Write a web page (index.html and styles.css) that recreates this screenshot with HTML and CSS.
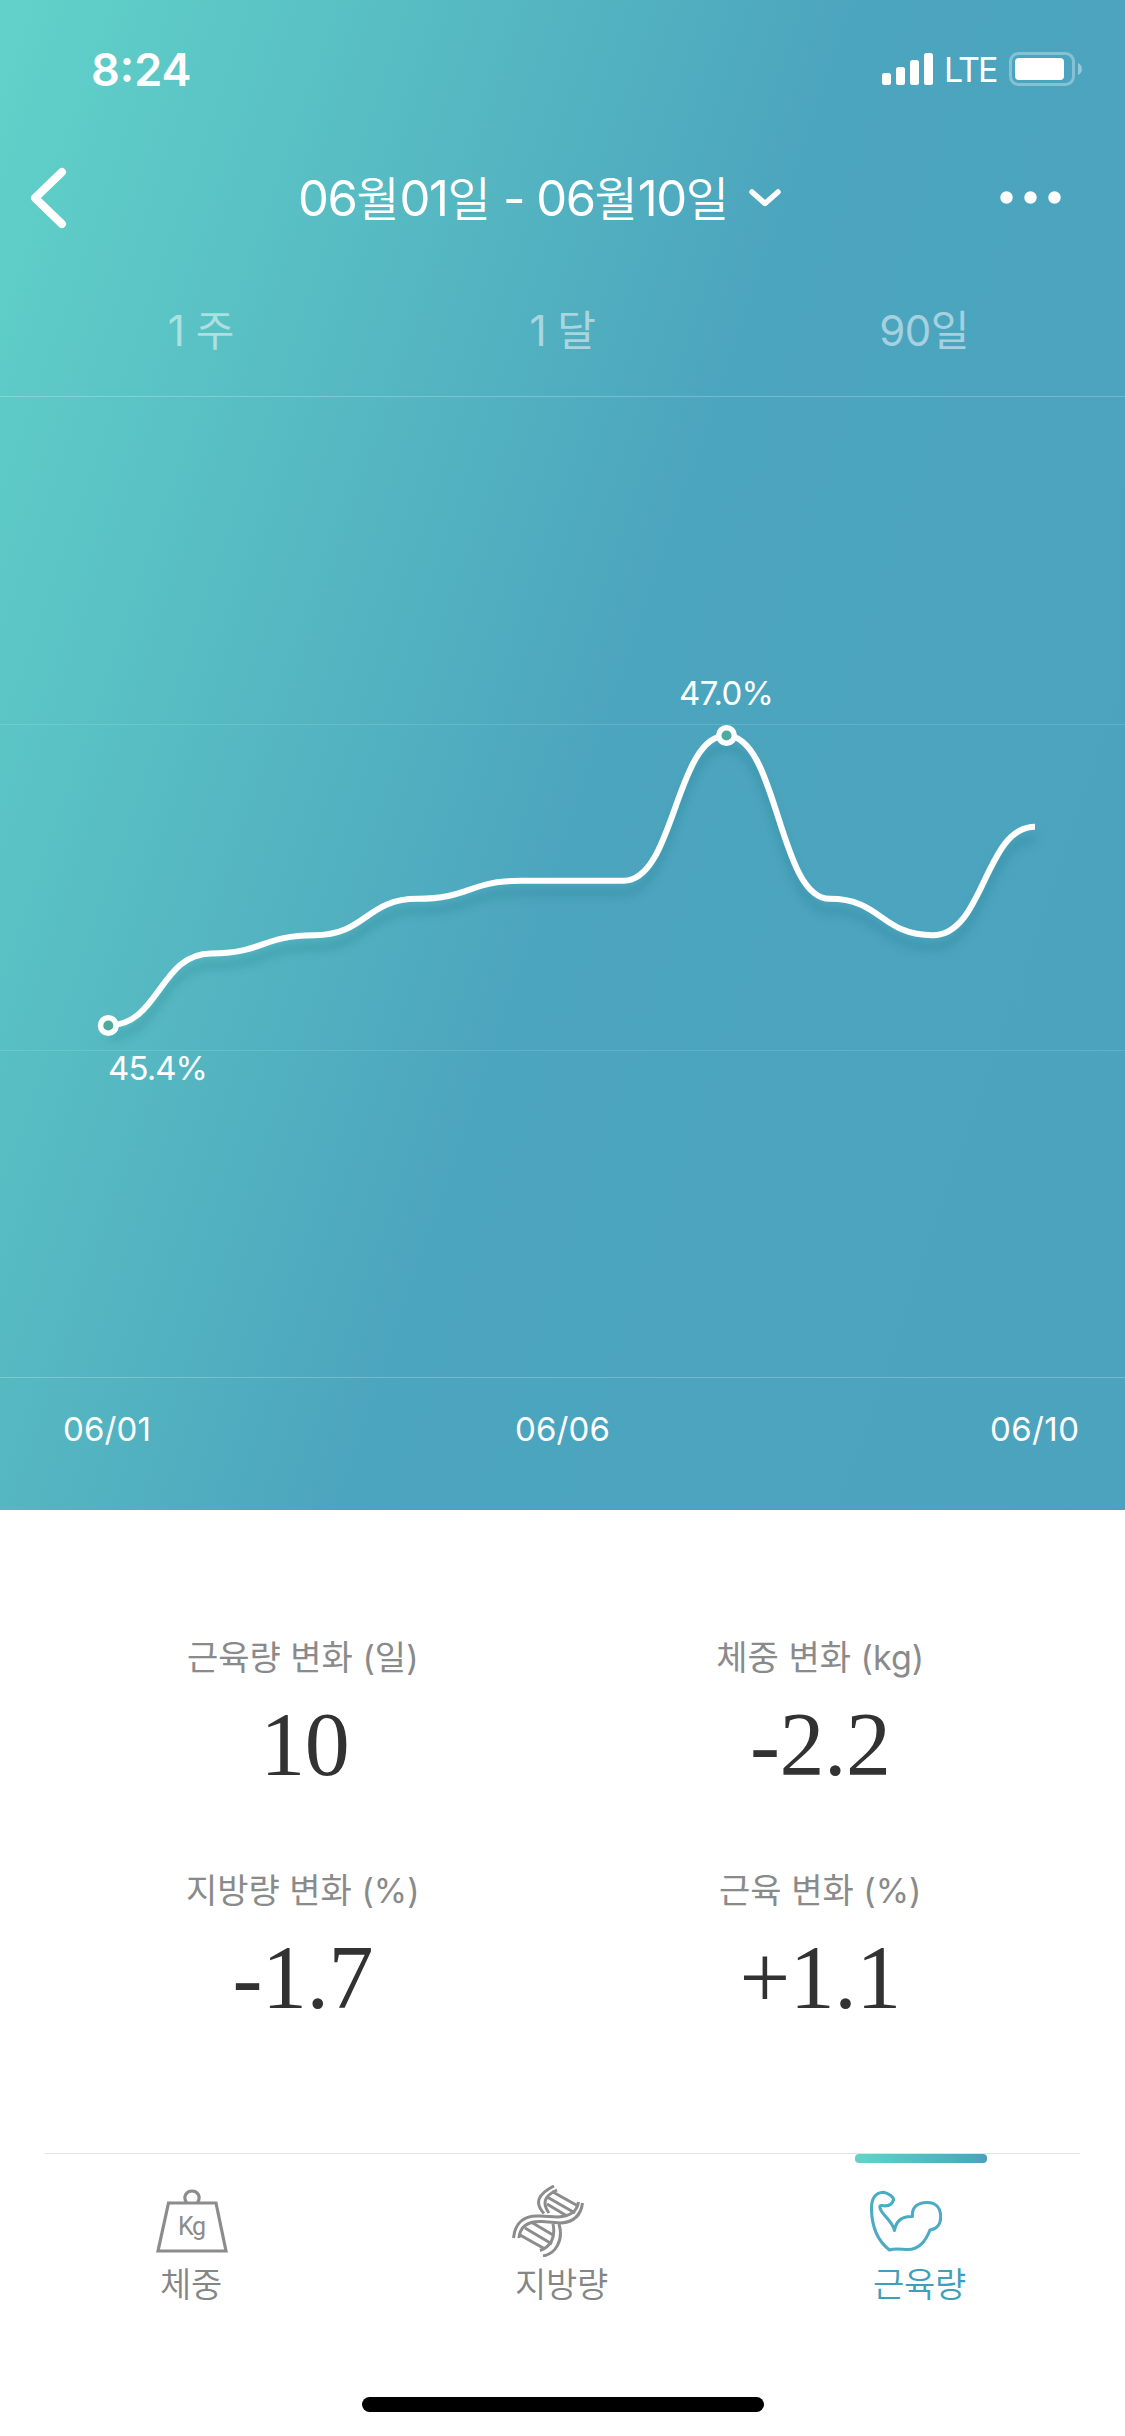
FILE: index.html
```html
<!DOCTYPE html>
<html lang="ko">
<head>
<meta charset="utf-8">
<title>근육량</title>
<link rel="stylesheet" href="styles.css">
</head>
<body>
<main class="screen">
  <section class="hero">
    <div class="status">
      <span class="clock">8:24</span>
      <div class="status-right">
        <svg class="signal" width="51" height="34" viewBox="0 0 51 34" fill="#fff">
          <rect x="0" y="21" width="9" height="12" rx="2.5"/><rect x="14" y="15" width="9" height="18" rx="2.5"/><rect x="28" y="8" width="9" height="25" rx="2.5"/><rect x="42" y="1" width="9" height="32" rx="2.5"/>
        </svg>
        <span class="carrier">LTE</span>
        <svg class="battery" width="74" height="34" viewBox="0 0 74 34">
          <rect x="1.5" y="1.5" width="63" height="31" rx="8" fill="none" stroke="#fff" stroke-opacity=".32" stroke-width="3"/>
          <rect x="6" y="6" width="49" height="22" rx="4" fill="#fff"/>
          <path d="M69 11c5.300 2 5.300 10 0 12z" fill="#fff" fill-opacity=".4"/>
        </svg>
      </div>
    </div>
    <header class="nav">
      <svg class="back" width="44" height="66" viewBox="0 0 44 66" fill="none" stroke="#fff" stroke-width="8" stroke-linecap="round" stroke-linejoin="round"><path d="M37 7 10 33 37 59"/></svg>
      <h1 class="range"><span class="range-text">06<b>월</b>01<b>일</b> - 06<b>월</b>10<b>일</b></span>
        <svg class="caret" width="34" height="22" viewBox="0 0 34 22" fill="none" stroke="#fff" stroke-width="5.500" stroke-linecap="round" stroke-linejoin="round"><path d="M4 5 17 16.500 30 5"/></svg>
      </h1>
      <svg class="more" width="62" height="14" viewBox="0 0 62 14" fill="#fff"><circle cx="6.500" cy="6.500" r="6.200"/><circle cx="30.500" cy="6.500" r="6.200"/><circle cx="54.500" cy="6.500" r="6.200"/></svg>
    </header>
    <nav class="periods"><span>1 주</span><span>1 달</span><span>90일</span></nav>
    <svg class="chart" width="1125" height="1114" viewBox="0 396 1125 1114">
      <defs>
        <filter id="shade" x="-10%" y="-20%" width="120%" height="150%">
          <feDropShadow dx="0" dy="12" stdDeviation="5" flood-color="#1c5a66" flood-opacity=".25"/>
        </filter>
      </defs>
      <g class="gridlines">
        <path class="edge" d="M0 396.500H1125"/><path d="M0 724.500H1125M0 1050.500H1125"/><path class="edge" d="M0 1377.500H1125"/>
      </g>
      <path class="line" filter="url(#shade)" d="M108 1025.500C159.500 1025.500 159.500 953.500 211 953.500S262.700 935.300 314.300 935.300S366 898.800 417.500 898.800S469 880.800 520.500 880.800H623.500C675 880.800 675 735.500 726.500 735.500S778.300 898.800 829.800 898.800S881.500 935.300 932.800 935.300S984.500 826.700 1035 826.700"/>
      <circle class="dot" cx="108.300" cy="1025.500" r="7.800"/>
      <circle class="dot" cx="726.500" cy="735.500" r="7.800"/>
      <g class="chart-text">
        <text x="679" y="705" textLength="95">47.0%</text>
        <text x="108" y="1079.500" textLength="100">45.4%</text>
        <text x="63" y="1441" textLength="88">06/01</text>
        <text x="515" y="1441" textLength="95">06/06</text>
        <text x="990" y="1441" textLength="89">06/10</text>
      </g>
    </svg>
  </section>

  <section class="stats">
    <div class="stat"><span class="label">근육량 변화 (일)</span><strong class="value count">10</strong></div>
    <div class="stat"><span class="label">체중 변화 (kg)</span><strong class="value">-2.2</strong></div>
    <div class="stat"><span class="label">지방량 변화 (%)</span><strong class="value">-1.7</strong></div>
    <div class="stat"><span class="label">근육 변화 (%)</span><strong class="value">+1.1</strong></div>
  </section>

  <footer class="tabs">
    <div class="tab weight">
      <svg width="72" height="72" viewBox="0 0 72 72" fill="none" stroke="#8c8c8c" stroke-width="3.200">
        <path d="M12.500 18H60L70 66H2Z"/><path d="M30.500 17.500C26.500 11.500 30.500 6 36 6S45.500 11.500 41.500 17.500"/>
        <text class="kg" x="22" y="49.500" textLength="28">Kg</text>
      </svg>
      <span class="tab-label">체중</span>
    </div>
    <div class="tab fat">
      <svg width="72" height="72" viewBox="0 0 72 72" fill="none" stroke="#8c8c8c" stroke-width="3">
        <path d="M42 1C26 9 22 18 32 28.500M45 5C32 11 30 18 37 28"/>
        <path d="M1.500 53C3 37 13 30 28 31L46 32C58 31 65 27 66.500 17M7 53C8 41 16 36 30 36.500L49 38C62 37 69 30 70.500 18"/>
        <path d="M41 39C44 53 38 62 28 65.500M47 39C52 56 43 69 31 71"/>
        <path d="M40 6.500 66 21M36 12.500 63 28M35 19 55 31M19 37 41 50M13 43 40 59M8 50 33 64"/>
      </svg>
      <span class="tab-label">지방량</span>
    </div>
    <div class="tab muscle">
      <svg width="72" height="72" viewBox="0 0 72 72" fill="none" stroke="#4babc4" stroke-width="3.100" stroke-linejoin="round">
        <path d="M24.500 45.500C26 36 32 31 42.500 31.500C41.500 22 48 17.500 57 17.500C66 17.500 70.700 23 70.700 32C70.700 39 67 44 60 45C55 58 47 64.500 38 64.500C32 64.500 25 63 19.500 65C8 56 1.500 43 1.500 23C1.500 13 6 7.500 13.500 7.200C18 8 24 12 23.500 15C22 19 19 22 12 20.500C8.500 20 10 24 12 27C16 33 23 38 24.500 45.500Z"/>
      </svg>
      <span class="tab-label">근육량</span>
      <i class="indicator"></i>
    </div>
  </footer>
  <div class="home"></div>
</main>
</body>
</html>
```
FILE: styles.css
```css
* { box-sizing: border-box; }
body { margin: 0; background: #fff; font-family: Inter, "Noto Sans CJK KR", sans-serif; }
svg { display: block; flex: none; }
.screen { width: 1125px; height: 2436px; display: flex; flex-direction: column; background: #fff; overflow: hidden; }

.hero {
  height: 1510px; display: flex; flex-direction: column; color: #fff;
  background: linear-gradient(109deg, #61d2c9 0%, #54b5c1 34%, #4ca5be 52%, #4ba3be 100%);
}
.status { height: 138px; padding: 0 42px 0 91px; display: flex; justify-content: space-between; align-items: center; }
.clock { font-size: 45px; font-weight: 600; letter-spacing: 0; }
.status-right { display: flex; align-items: center; }
.carrier { width: 54px; margin: 1px 11px 0 11px; font-size: 34px; letter-spacing: -2px; }

.nav { height: 120px; padding: 0 63px 0 25px; display: flex; align-items: center; }
.range { margin: 0 auto 0 229px; display: flex; align-items: center; gap: 20px; font-size: 49px; font-weight: 400; }
.range-text { width: 430px; height: 58px; line-height: 60px; white-space: nowrap; letter-spacing: -1.500px; }
.range-text b { font-size: 47px; font-weight: 350; letter-spacing: 0; }

.periods { height: 138px; padding: 0 20px; display: grid; grid-template-columns: repeat(3, 1fr); align-items: center; text-align: center; font-size: 42px; font-weight: 400; letter-spacing: -0.500px; color: rgba(255, 255, 255, .5); }

.gridlines path { stroke: rgba(255, 255, 255, .13); stroke-width: 1; }
.gridlines .edge { stroke: rgba(255, 255, 255, .24); }
.line { fill: none; stroke: #fff; stroke-width: 6; }
.dot { fill: #4fa99c; stroke: #fff; stroke-width: 5.500; }
.chart-text { fill: #fff; font-size: 33px; font-weight: 400; }

.stats { height: 643px; padding: 113px 46px 0 44px; display: grid; grid-template-columns: 1fr 1fr; grid-auto-rows: 233px; }
.stat { display: flex; flex-direction: column; align-items: center; }
.label { height: 72px; line-height: 70px; font-size: 34px; font-weight: 400; color: #8a8a8a; }
.value { line-height: 100px; font-family: "Liberation Serif", serif; font-size: 90px; font-weight: 400; letter-spacing: -0.500px; color: #323232; }
.count { padding-left: 4px; }

.tabs { margin: 0 45px; height: 244px; border-top: 1px solid #e2e2e2; display: grid; grid-template-columns: 356px 358px 1fr; padding: 31px 0 0 111px; }
.tab { position: relative; display: flex; flex-direction: column; color: #858585; }
.tab-label { margin: 2px 0 0 3px; line-height: 52px; font-size: 34px; font-weight: 350; letter-spacing: -0.300px; }
.weight .tab-label { margin-left: 4px; }
.kg { fill: #8c8c8c; stroke: none; font-family: Roboto, sans-serif; font-size: 25px; font-weight: 400; }
.muscle { color: #3f9fba; }
.indicator { position: absolute; left: -15px; top: -31px; width: 132px; height: 9px; border-radius: 4px; background: linear-gradient(90deg, #62d4c9, #4aa2be); }
.home { width: 402px; height: 15px; margin: 0 auto 0 362px; border-radius: 8px; background: #000; }
```
